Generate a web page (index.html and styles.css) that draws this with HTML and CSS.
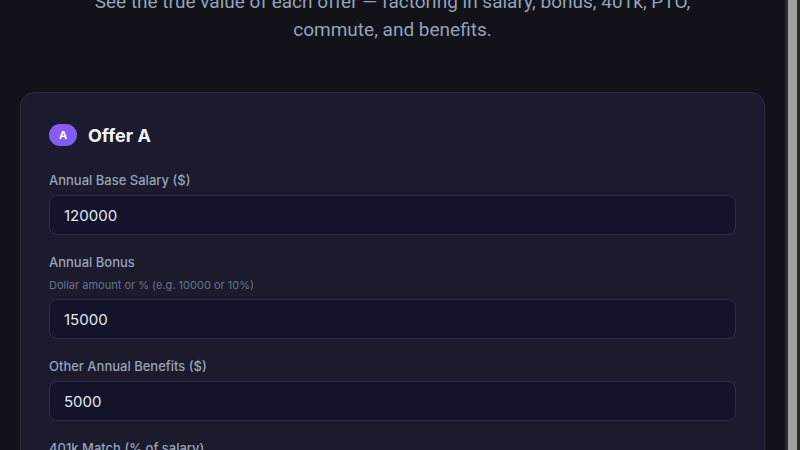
FILE: index.html
```html
<!DOCTYPE html>
<html lang="en">

<head>
  <meta charset="UTF-8" />
  <meta name="viewport" content="width=device-width, initial-scale=1.0" />
  <title>Offer Comparison</title>
  <link rel="stylesheet" href="styles.css">
</head>

<body>
  <div class="page">
    <p class="intro">See the true value of each offer — factoring in salary, bonus, 401k, PTO, commute, and benefits.</p>

    <!-- Offer A -->
    <div class="offer-card">
      <div class="offer-head">
        <span class="badge">A</span>
        <h2 class="offer-title">Offer A</h2>
      </div>

      <div class="field">
        <label class="label">Annual Base Salary ($)</label>
        <input class="input" type="text" value="120000">
      </div>

      <div class="field">
        <label class="label">Annual Bonus</label>
        <p class="hint">Dollar amount or % (e.g. 10000 or 10%)</p>
        <input class="input" type="text" value="15000">
      </div>

      <div class="field">
        <label class="label">Other Annual Benefits ($)</label>
        <input class="input" type="text" value="5000">
      </div>

      <div class="field">
        <label class="label">401k Match (% of salary)</label>
        <input class="input" type="text" value="4">
      </div>
    </div>
  </div>

  <div class="scrollbar">
    <div class="thumb"></div>
  </div>
</body>

</html>
```

FILE: styles.css
```css
body {
  margin: 0;
  padding: 0;
  height: 450px;
  overflow: hidden;
  display: flex;
  background-color: #12121b;
  font-family: Inter, "Liberation Sans", sans-serif;
}

/* main column */
.page {
  flex: 1;
  padding: 0 20px;
  overflow: hidden;
}

.intro {
  max-width: 630px;
  margin: -12px auto 48px;
  font-family: Roboto, Inter, sans-serif;
  font-size: 19px;
  line-height: 28px;
  text-align: center;
  color: #94a3b8;
}

/* offer card */
.offer-card {
  background-color: #1c1b2e;
  border: 1px solid #2b2a44;
  border-radius: 14px;
  padding: 28px;
}

.offer-head {
  display: flex;
  align-items: center;
  gap: 11px;
  height: 28px;
  margin-bottom: 22px;
}

.badge {
  width: 28px;
  height: 22px;
  border-radius: 11px;
  background: linear-gradient(135deg, #8b5cf6, #7c5cf0);
  color: #fff;
  font-size: 11px;
  font-weight: 700;
  line-height: 22px;
  text-align: center;
}

.offer-title {
  margin: 0;
  font-size: 18px;
  font-weight: 700;
  color: #f1f5f9;
}

/* form fields */
.field {
  margin-bottom: 18px;
}

.label {
  display: block;
  margin-bottom: 6px;
  font-size: 13px;
  font-weight: 500;
  line-height: 18px;
  color: #94a3b8;
}

.hint {
  margin: 0 0 6px;
  font-size: 11px;
  line-height: 16px;
  color: #64748b;
}

.input {
  display: block;
  box-sizing: border-box;
  width: 100%;
  height: 40px;
  padding: 0 14px;
  border: 1px solid #2c2b48;
  border-radius: 8px;
  background-color: #13132a;
  color: #e2e8f0;
  font-family: inherit;
  font-size: 15px;
  outline: none;
}

/* fake scrollbar */
.scrollbar {
  width: 15px;
  flex-shrink: 0;
  background-color: #2c2c2c;
  padding: 0 3px;
  box-sizing: border-box;
}

.thumb {
  height: 100%;
  background-color: #a1a1a1;
}
```
